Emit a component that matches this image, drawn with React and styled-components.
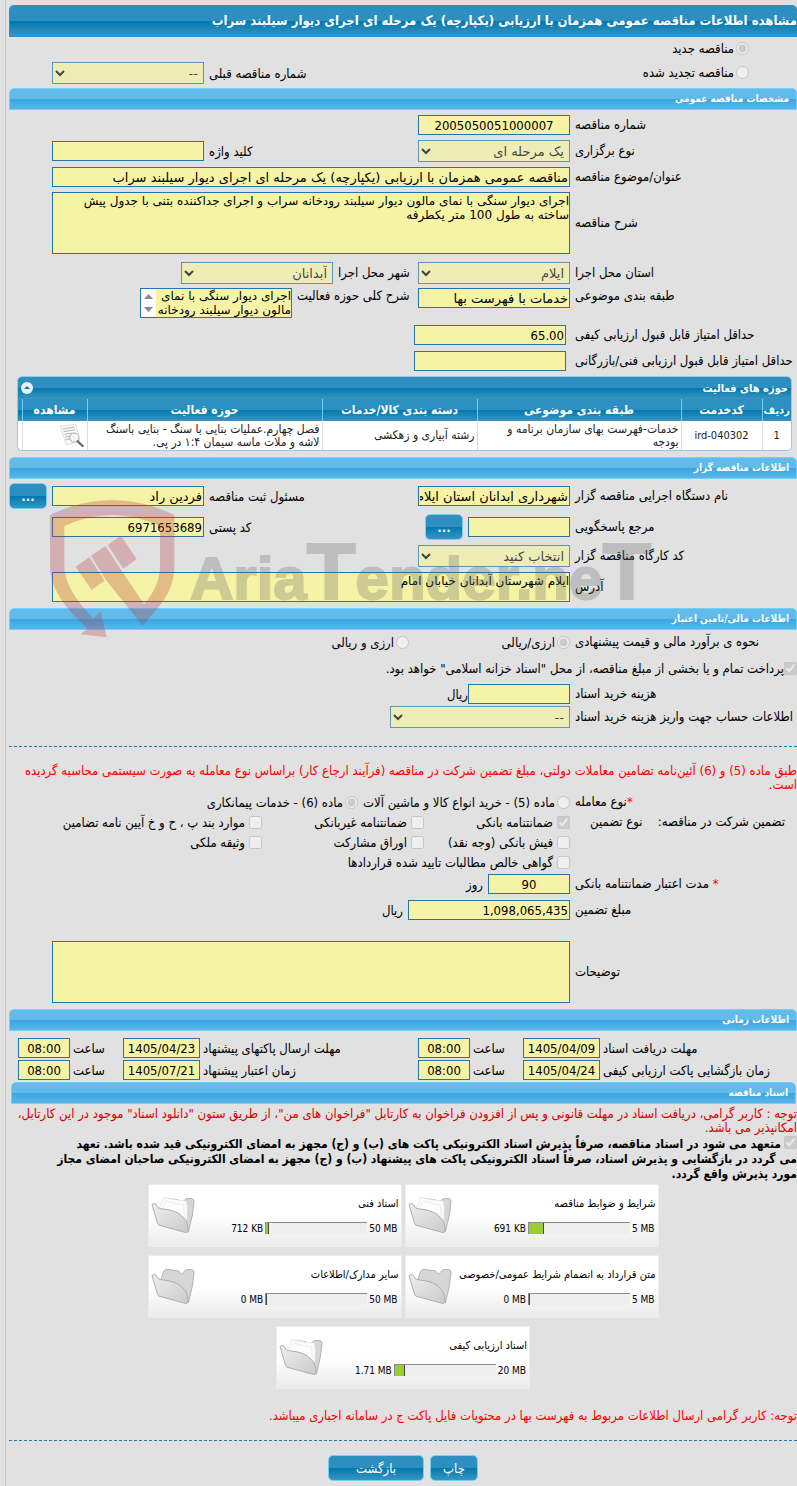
import React from 'react'
import styled, { createGlobalStyle, css } from 'styled-components';

const GlobalStyle = createGlobalStyle`
  *{
    box-sizing:border-box;
  }
  body{
    margin:0;
    background-color:#e1e1e1;
    color:#000;
    font-family:"DejaVu Sans Condensed","DejaVu Sans",sans-serif;
    font-size:13px;
  }
`

const docs = [
  {id:"terms",title:"شرایط و ضوابط مناقصه",used:"691 KB",max:"5 MB",percent:15},
  {id:"tech",title:"اسناد فنی",used:"712 KB",max:"50 MB",percent:3},
  {id:"contract",title:"متن قرارداد به انضمام شرایط عمومی/خصوصی",used:"0 MB",max:"5 MB",percent:0},
  {id:"other",title:"سایر مدارک/اطلاعات",used:"0 MB",max:"50 MB",percent:0},
  {id:"quality",title:"اسناد ارزیابی کیفی",used:"1.71 MB",max:"20 MB",percent:10},
]

const guarantees = [
  {id:"g1",label:"ضمانتنامه بانکی",checked:true},
  {id:"g2",label:"ضمانتنامه غیربانکی"},
  {id:"g3",label:"موارد بند پ ، ح و خ آیین نامه تضامین"},
  {id:"g4",label:"فیش بانکی (وجه نقد)"},
  {id:"g5",label:"اوراق مشارکت"},
  {id:"g6",label:"وثیقه ملکی"},
]

const times = [
  {id:"t1",label:"مهلت دریافت اسناد",date:"1405/04/09"},
  {id:"t2",label:"مهلت ارسال پاکتهای پیشنهاد",date:"1405/04/23"},
  {id:"t3",label:"زمان بازگشایی پاکت ارزیابی کیفی",date:"1405/04/24"},
  {id:"t4",label:"زمان اعتبار پیشنهاد",date:"1405/07/21"},
]

const Choice = ({id,type="checkbox",name,label,checked,gap}) => (
  <ChoiceBox $gap={gap}>
    <input id={id} type={type} name={name} defaultChecked={checked} disabled />
    <label htmlFor={id}>{label}</label>
  </ChoiceBox>
)

const FolderIcon = ({full}) => (
  <svg width="44" height="37" viewBox="0 0 132 110" aria-hidden="true">
    <defs>
      <linearGradient id="folderFront" x1="0" y1="0" x2="1" y2="1">
        <stop offset="0" stopColor="#efefef" />
        <stop offset="1" stopColor="#cacaca" />
      </linearGradient>
    </defs>
    <path d="M28 40 L38 9 Q42 3 50 4 L82 8 L92 18 L103 6 Q108 3 122 4 Q130 6 129 14 L124 54 L112 104 Z" fill="#d6d6d6" stroke="#b2b2b2" strokeWidth="3" />
    {full ? <path d="M24 36 L38 1 L70 7 L106 12 L109 30 L107 80 L60 48 Z" fill="#fcfcfc" stroke="#dedede" strokeWidth="2" /> : null}
    {full ? <path d="M34 32 L44 12 L98 24 L100 60" fill="none" stroke="#e4e4e4" strokeWidth="2" /> : null}
    <path d="M3 22 Q6 18 14 20 L22 32 Q30 36 48 37 Q78 42 92 56 Q108 68 110 86 L111 100 Q110 107 104 106 L24 84 Q20 82 19 76 Z" fill="url(#folderFront)" stroke="#aeaeae" strokeWidth="3" />
  </svg>
)

const ViewIcon = () => (
  <svg width="26" height="26" viewBox="0 0 78 78" aria-hidden="true">
    <path d="M4 10 L50 3 L62 52 L22 66 Z" fill="#fafafa" stroke="#cfcfcf" strokeWidth="2" />
    <path d="M12 18 L46 12 M14 26 L48 20 M16 34 L40 30 M18 42 L36 39 M20 50 L36 47" stroke="#b5b5b5" strokeWidth="3" />
    <circle cx="46" cy="44" r="14" fill="#f3f3f3" fillOpacity="0.9" stroke="#b0b0b0" strokeWidth="3" />
    <path d="M56 55 L71 69" stroke="#6b6b6b" strokeWidth="7" strokeLinecap="round" />
  </svg>
)

const Watermark = () => (
  <WatermarkBox aria-hidden="true">
    <svg width="127" height="140" viewBox="0 0 381 420">
      <g fill="#b4323c">
        <path d="M3 48 Q190 -42 376 48 L376 200 Q376 260 340 310 L281 380 L171 243 L126 170 L169 141 L215 211 L285 316 Q333 260 333 200 L333 81 Q190 15 46 81 L46 200 Q46 270 133 358 L155 338 L173 415 L95 406 L115 388 Q3 290 3 200 Z" />
        <path d="M80 203 L121 175 L167 245 L128 273 Z" />
        <path d="M176 138 L216 110 L263 180 L223 209 Z" />
      </g>
    </svg>
    <WatermarkText>Aria<b>T</b>ender.ne<b>T</b></WatermarkText>
  </WatermarkBox>
)

const DocCard = ({title,used,max,percent}) => (
  <Card>
    <CardInfo>
      <h4>{title}</h4>
      <Usage>
        <span>{used}</span>
        <Bar><div style={{width:`${percent}%`}} /></Bar>
        <span>{max}</span>
      </Usage>
    </CardInfo>
    <FolderIcon full={percent > 0} />
  </Card>
)

const App = () => {
  return(
    <Page dir="rtl" lang="fa">
      <GlobalStyle />
      <PageTitle>مشاهده اطلاعات مناقصه عمومی همزمان با ارزیابی (یکپارچه) یک مرحله ای اجرای دیوار سیلبند سراب</PageTitle>
      <TypeRow>
        <div>
          <Choice id="new" type="radio" name="kind" label="مناقصه جدید" checked gap={2} />
          <Choice id="renewed" type="radio" name="kind" label="مناقصه تجدید شده" gap={2} />
        </div>
        <Group>
          <label htmlFor="prev">شماره مناقصه قبلی</label>
          <Select id="prev" disabled><option>--</option></Select>
        </Group>
      </TypeRow>

      <SectionTitle>مشخصات مناقصه عمومی</SectionTitle>
      <Body $gap={4}>
        <Row>
          <Label htmlFor="number">شماره مناقصه</Label>
          <Fields><NumberInput id="number" $align="center" readOnly value="2005050051000007" /></Fields>
        </Row>
        <Row>
          <Label htmlFor="stage">نوع برگزاری</Label>
          <Fields>
            <Select id="stage" disabled><option>یک مرحله ای</option></Select>
            <Group $end>
              <label htmlFor="keyword">کلید واژه</label>
              <Input id="keyword" readOnly value="" />
            </Group>
          </Fields>
        </Row>
        <Row>
          <Label htmlFor="title">عنوان/موضوع مناقصه</Label>
          <Fields><Input id="title" $wide readOnly value="مناقصه عمومی همزمان با ارزیابی (یکپارچه) یک مرحله ای اجرای دیوار سیلبند سراب" /></Fields>
        </Row>
        <Row>
          <Label htmlFor="desc">شرح مناقصه</Label>
          <Fields><TextArea id="desc" $height={62} readOnly value={"اجرای دیوار سنگی با نمای مالون دیوار سیلبند رودخانه سراب و اجرای جداکننده بتنی با جدول پیش\nساخته به طول 100 متر یکطرفه"} /></Fields>
        </Row>
        <Row $space={4}>
          <Label htmlFor="state">استان محل اجرا</Label>
          <Fields>
            <Select id="state" disabled><option>ایلام</option></Select>
            <InnerLabel htmlFor="city" $width={80}>شهر محل اجرا</InnerLabel>
            <Select id="city" disabled><option>آبدانان</option></Select>
          </Fields>
        </Row>
        <Row $top>
          <Label htmlFor="category">طبقه بندی موضوعی</Label>
          <Fields $top>
            <Input id="category" readOnly value="خدمات با فهرست بها" />
            <InnerLabel htmlFor="scope" $width={121}>شرح کلی حوزه فعالیت</InnerLabel>
            <ScrollBox>
              <TextArea id="scope" $height={28} readOnly value={"اجرای دیوار سنگی با نمای\nمالون دیوار سیلبند رودخانه"} />
              <ScrollBar>
                <svg width="9" height="5" viewBox="0 0 9 5"><path d="M0 5 L4.5 0 L9 5 Z" fill="#8a8a8a" /></svg>
                <svg width="9" height="5" viewBox="0 0 9 5"><path d="M0 0 L4.5 5 L9 0 Z" fill="#8a8a8a" /></svg>
              </ScrollBar>
            </ScrollBox>
          </Fields>
        </Row>
        <Row $gap={9} $space={2}>
          <Label htmlFor="minQuality">حداقل امتیاز قابل قبول ارزیابی کیفی</Label>
          <Fields><NumberInput id="minQuality" readOnly value="65.00" /></Fields>
        </Row>
        <Row $gap={9}>
          <Label htmlFor="minTech">حداقل امتیاز قابل قبول ارزیابی فنی/بازرگانی</Label>
          <Fields><NumberInput id="minTech" readOnly value="" /></Fields>
        </Row>
        <TablePanel>
          <TableHead>
            <span>حوزه های فعالیت</span>
            <button aria-label="بستن">
              <svg width="12" height="12" viewBox="0 0 12 12"><circle cx="6" cy="6" r="6" fill="#e4f1fa" /><path d="M3 7 L6 4 L9 7 Z" fill="#2e6e9e" /></svg>
            </button>
          </TableHead>
          <Table>
            <thead>
              <tr>
                <Th $width={29}>ردیف</Th>
                <Th $width={81}>کدخدمت</Th>
                <Th>طبقه بندی موضوعی</Th>
                <Th $width={155}>دسته بندی کالا/خدمات</Th>
                <Th $width={235}>حوزه فعالیت</Th>
                <Th $width={65}>مشاهده</Th>
                <Th $width={4} aria-hidden="true" />
              </tr>
            </thead>
            <tbody>
              <tr>
                <CenterCell>1</CenterCell>
                <CenterCell>ird-040302</CenterCell>
                <td>خدمات-فهرست بهای سازمان برنامه و<br />بودجه</td>
                <td>رشته آبیاری و زهکشی</td>
                <td>فصل چهارم.عملیات بنایی با سنگ - بنایی باسنگ<br />لاشه و ملات ماسه سیمان ۱:۴ در پی.</td>
                <td><ViewIcon /></td>
                <td />
              </tr>
            </tbody>
          </Table>
        </TablePanel>
      </Body>

      <SectionTitle>اطلاعات مناقصه گزار</SectionTitle>
      <Body $gap={5}>
        <Row>
          <Label htmlFor="org">نام دستگاه اجرایی مناقصه گزار</Label>
          <Fields $edge>
            <Input id="org" readOnly value="شهرداری ابدانان استان ایلام" />
            <Group $end>
              <label htmlFor="officer">مسئول ثبت مناقصه</label>
              <Input id="officer" readOnly value="فردین راد" />
              <MoreButton>...</MoreButton>
            </Group>
          </Fields>
        </Row>
        <Row>
          <Label htmlFor="contact">مرجع پاسخگویی</Label>
          <Fields>
            <Input id="contact" $width={102} readOnly value="" />
            <MoreButton>...</MoreButton>
            <Group $end>
              <label htmlFor="postal">کد پستی</label>
              <NumberInput id="postal" readOnly value="6971653689" />
            </Group>
          </Fields>
        </Row>
        <Row>
          <Label htmlFor="workshop">کد کارگاه مناقصه گزار</Label>
          <Fields><Select id="workshop" disabled><option>انتخاب کنید</option></Select></Fields>
        </Row>
        <Row>
          <Label htmlFor="address">آدرس</Label>
          <Fields><TextArea id="address" $height={30} readOnly value="ایلام شهرستان آبدانان خیابان امام" /></Fields>
        </Row>
      </Body>
      <Watermark />

      <SectionTitle>اطلاعات مالی/تامین اعتبار</SectionTitle>
      <Body $gap={5} $start={1} $bottom={1}>
        <Row>
          <Label as="span">نحوه ی برآورد مالی و قیمت پیشنهادی</Label>
          <Fields>
            <ChoiceCell><Choice id="rial" type="radio" name="currency" label="ارزی/ریالی" checked gap={2} /></ChoiceCell>
            <Choice id="both" type="radio" name="currency" label="ارزی و ریالی" gap={2} />
          </Fields>
        </Row>
        <Choice id="treasury" label='پرداخت تمام و یا بخشی از مبلغ مناقصه، از محل "اسناد خزانه اسلامی" خواهد بود.' checked gap={0} />
        <Pair>
          <Row>
            <Label htmlFor="cost">هزینه خرید اسناد</Label>
            <Fields $tight>
              <Input id="cost" $width={102} readOnly value="" />
              <span>ریال</span>
            </Fields>
          </Row>
          <Row>
            <Label htmlFor="account">اطلاعات حساب جهت واریز هزینه خرید اسناد</Label>
            <Fields><Select id="account" $width={180} disabled><option>--</option></Select></Fields>
          </Row>
        </Pair>
      </Body>
      <Divider $bottom={17} />

      <Note $color="#ff0000">
        طبق ماده (5) و (6) آئین‌نامه تضامین معاملات دولتی، مبلغ تضمین شرکت در مناقصه (فرآیند ارجاع کار) براساس نوع معامله به صورت سیستمی محاسبه گردیده<br />است.
      </Note>
      <Row $small>
        <Label as="span"><em>*</em>نوع معامله</Label>
        <Fields>
          <Choice id="m5" type="radio" name="deal" label="ماده (5) - خرید انواع کالا و ماشین آلات" gap={2} />
          <Choice id="m6" type="radio" name="deal" label="ماده (6) - خدمات پیمانکاری" checked gap={2} />
        </Fields>
      </Row>
      <GuaranteeRow>
        <GuaranteeLabel>
          <span>تضمین شرکت در مناقصه:</span>
          <span>نوع تضمین</span>
        </GuaranteeLabel>
        <GuaranteeGrid>
          {guarantees.map((item) => <Choice key={item.id} {...item} gap={4} />)}
          <WideCell><Choice id="g7" label="گواهی خالص مطالبات تایید شده قراردادها" gap={4} /></WideCell>
        </GuaranteeGrid>
      </GuaranteeRow>
      <Body $gap={4} $start={1}>
        <Row>
          <Label htmlFor="validity"><em>*</em> مدت اعتبار ضمانتنامه بانکی</Label>
          <Fields><NumberInput id="validity" $width={82} $align="center" readOnly value="90" /><span>روز</span></Fields>
        </Row>
        <Row>
          <Label htmlFor="amount">مبلغ تضمین</Label>
          <Fields><NumberInput id="amount" $width={162} readOnly value="1,098,065,435" /><span>ریال</span></Fields>
        </Row>
        <Row $space={16}>
          <Label htmlFor="remarks">توضیحات</Label>
          <Fields><TextArea id="remarks" $height={62} readOnly value="" /></Fields>
        </Row>
      </Body>

      <SectionTitle>اطلاعات زمانی</SectionTitle>
      <TimeGrid>
        {times.map(({id,label,date}) => (
          <React.Fragment key={id}>
            <label htmlFor={id}>{label}</label>
            <NumberInput id={id} $width={77} $align="center" readOnly value={date} />
            <label htmlFor={id + "h"}>ساعت</label>
            <NumberInput id={id + "h"} $width={52} $align="center" readOnly value="08:00" />
          </React.Fragment>
        ))}
      </TimeGrid>

      <SectionTitle $inset>اسناد مناقصه</SectionTitle>
      <Notes>
        <Note $color="#d90000">
          توجه : کاربر گرامی، دریافت اسناد در مهلت قانونی و پس از افزودن فراخوان به کارتابل "فراخوان های من"، از طریق ستون "دانلود اسناد" موجود در این کارتابل،<br />امکانپذیر می باشد.
        </Note>
        <Pledge>
          <input id="pledge" type="checkbox" defaultChecked disabled />
          <label htmlFor="pledge">
            متعهد می شود در اسناد مناقصه، صرفاً پذیرش اسناد الکترونیکی پاکت های (ب) و (ج) مجهز به امضای الکترونیکی قید شده باشد. تعهد<br />
            می گردد در بازگشایی و پذیرش اسناد، صرفاً اسناد الکترونیکی پاکت های پیشنهاد (ب) و (ج) مجهز به امضای الکترونیکی صاحبان امضای مجاز<br />
            مورد پذیرش واقع گردد.
          </label>
        </Pledge>
      </Notes>
      <Cards>
        {docs.map((item) => <DocCard key={item.id} {...item} />)}
      </Cards>
      <Note $color="#ff0000">توجه: کاربر گرامی ارسال اطلاعات مربوط به فهرست بها در محتویات فایل پاکت ج در سامانه اجباری میباشد.</Note>
      <Divider $bottom={14} />
      <Actions>
        <ActionButton>چاپ</ActionButton>
        <ActionButton $wide>بازگشت</ActionButton>
      </Actions>
    </Page>
  )
}

export default App


const darkBlue = css`
  background:linear-gradient(#2e90c0 0%,#2c8fc0 50%,#0078ae 50%,#3a94c2 100%);
`

const Page = styled.div`
  position:relative;
  margin-left:5px;
  padding:5px 0px 5px 3px;
  border-left:1px solid #c6c6c6;
  overflow:hidden;

  em{
    color:#ff0000;
    font-style:normal;
  }
`

const PageTitle = styled.h1`
  ${darkBlue}
  margin:0px;
  height:32px;
  border:1px solid #2a8fd8;
  border-right:none;
  border-radius:5px 5px 0px 0px;
  color:white;
  font-size:13px;
  white-space:nowrap;
  line-height:30px;
`

const TypeRow = styled.div`
  display:flex;
  justify-content:space-between;
  align-items:flex-end;
  height:51px;
  padding:0px 48px 4px 43px;

  & > div:first-child > div{
    height:24px;
  }
`

const SectionTitle = styled.h2`
  margin:${(props) => (props.$inset ? "0px 1px 0px 2px" : "0px")};
  height:22px;
  line-height:20px;
  padding-right:7px;
  border:1px solid #6fd0f8;
  border-radius:5px 5px 0px 0px;
  background:linear-gradient(#63bbeb 0%,#62baea 50%,#38a6e2 50%,#5cb5e8 100%);
  color:white;
  font-size:10px;
`

const Body = styled.div`
  display:flex;
  flex-direction:column;
  gap:${(props) => props.$gap}px;
  padding-top:${(props) => props.$start || 4}px;
  padding-bottom:${(props) => props.$bottom || 6}px;
`

const Pair = styled.div`
  display:flex;
  flex-direction:column;
  gap:1px;
`

const Row = styled.div`
  display:flex;
  align-items:${(props) => (props.$top ? "flex-start" : "center")};
  gap:${(props) => props.$gap || 5}px;
  min-height:${(props) => (props.$small ? 20 : 22)}px;
  margin-top:${(props) => props.$space || 0}px;
`

const Label = styled.label`
  flex:none;
  width:222px;
  line-height:16px;
  text-align:left;
  white-space:nowrap;
`

const InnerLabel = styled(Label)`
  width:${(props) => props.$width}px;
  margin-right:-5px;
`

const Fields = styled.div`
  flex:1;
  display:flex;
  align-items:${(props) => (props.$top ? "flex-start" : "center")};
  gap:${(props) => (props.$tight ? 0 : 5)}px;
  padding-left:${(props) => (props.$edge ? 0 : 43)}px;
  white-space:nowrap;
`

const Group = styled.div`
  display:flex;
  align-items:center;
  gap:5px;
  margin-right:${(props) => (props.$end ? "auto" : "0px")};
`

const fieldStyle = css`
  margin:0px;
  border:1px solid #2675a8;
  border-radius:0px;
  background-color:#f5f3a5;
  color:#000;
  font-family:"DejaVu Sans",sans-serif;
  outline:none;
`

const Input = styled.input`
  ${fieldStyle}
  width:${(props) => (props.$wide ? "100%" : `${props.$width || 152}px`)};
  height:20px;
  padding:0px 1px;
  font-size:13px;
  text-align:${(props) => props.$align || "right"};
`

const NumberInput = styled(Input)`
  font-family:"DejaVu Sans Condensed","DejaVu Sans",sans-serif;
`

const Select = styled.select`
  ${fieldStyle}
  width:${(props) => props.$width || 152}px;
  height:22px;
  padding:0px 1px;
  font-size:13px;
`

const TextArea = styled.textarea`
  ${fieldStyle}
  display:block;
  width:100%;
  height:${(props) => props.$height}px;
  padding:1px 0px;
  font-size:12px;
  line-height:14px;
  resize:none;
`

const ScrollBox = styled.div`
  display:flex;
  width:152px;
  border:1px solid #2675a8;
  background-color:#fcfcfc;

  textarea{
    flex:1;
    min-width:0px;
    padding:0px;
    border:none;
    overflow:hidden;
    white-space:pre;
  }
`

const ScrollBar = styled.div`
  display:flex;
  flex-direction:column;
  align-items:center;
  justify-content:space-between;
  width:15px;
  padding:5px 0px;
`

const ChoiceBox = styled.div`
  display:flex;
  align-items:center;
  gap:${(props) => props.$gap}px;
  min-height:20px;
  white-space:nowrap;

  input{
    margin:0px;
    width:13px;
    height:13px;
  }
`

const ChoiceCell = styled.div`
  width:156px;
`

const button = css`
  ${darkBlue}
  height:26px;
  padding:0px;
  border:1px solid #6fd0f8;
  border-radius:5px;
  color:white;
  font-family:inherit;
  font-size:13px;
`

const MoreButton = styled.button`
  ${button}
  width:38px;
  font-weight:bold;
`

const ActionButton = styled.button`
  ${button}
  width:${(props) => (props.$wide ? 96 : 48)}px;
`

const TablePanel = styled.div`
  margin:0px 5px 0px 8px;
  border:1px solid #9cc8e6;
  border-radius:5px;
  background-color:white;
  overflow:hidden;
`

const TableHead = styled.div`
  ${darkBlue}
  display:flex;
  align-items:center;
  justify-content:space-between;
  height:22px;
  padding:0px 3px;
  color:white;
  font-size:11px;
  font-weight:bold;

  button{
    display:flex;
    padding:0px;
    border:none;
    background:none;
  }
`

const Table = styled.table`
  width:100%;
  border-collapse:collapse;
  table-layout:fixed;

  td{
    height:29px;
    padding:0px 2px;
    border-left:1px solid #dcdcdc;
    color:#222;
    font-size:12px;
    line-height:13px;
    white-space:nowrap;
  }
  td:last-child,
  th:last-child{
    border-left:none;
  }
  th:first-child{
    font-size:11px;
  }
  svg{
    display:block;
  }
`

const Th = styled.th`
  ${darkBlue}
  width:${(props) => (props.$width ? `${props.$width}px` : "auto")};
  height:22px;
  padding:0px;
  border-left:1px solid #6fd0f8;
  color:white;
  font-size:12px;
  white-space:nowrap;
`

const CenterCell = styled.td`
  text-align:center;

  ${Table} &{
    font-size:11px;
  }
`

const Divider = styled.hr`
  margin:17px 0px ${(props) => props.$bottom}px;
  border:none;
  border-top:1px dashed #2675a8;
`

const Note = styled.p`
  margin:0px;
  color:${(props) => props.$color};
  line-height:14px;
  white-space:nowrap;
`

const GuaranteeRow = styled.div`
  display:flex;
  gap:5px;
  height:60px;
`

const GuaranteeLabel = styled.div`
  display:flex;
  justify-content:space-between;
  width:222px;
  padding:0px 12px 0px 15px;
  line-height:20px;
  white-space:nowrap;
`

const GuaranteeGrid = styled.div`
  flex:1;
  display:grid;
  grid-template-columns:146px 162px 1fr;
`

const WideCell = styled.div`
  grid-column:1 / -1;
`

const TimeGrid = styled.div`
  display:grid;
  grid-template-columns:197px 77px 53px 52px 1fr 77px 53px 52px;
  align-items:center;
  grid-auto-rows:22px;
  padding:6px 0px 1px 9px;

  label{
    padding-left:3px;
    text-align:left;
    white-space:nowrap;
  }
`

const Notes = styled.div`
  display:flex;
  flex-direction:column;
  gap:1px;
  padding:3px 0px 2px;
`

const Pledge = styled.div`
  font-size:12px;
  font-weight:bold;
  line-height:15px;
  white-space:nowrap;

  input{
    margin:0px 0px 0px 3px;
    width:13px;
    height:13px;
    vertical-align:-1px;
  }
`

const Cards = styled.div`
  display:flex;
  flex-wrap:wrap;
  justify-content:center;
  gap:8px 3px;
  max-width:520px;
  margin:0px auto 20px;
`

const Card = styled.div`
  display:flex;
  justify-content:space-between;
  align-items:center;
  width:254px;
  height:63px;
  padding:0px 2px;
  border:1px solid #ececec;
  background:linear-gradient(#ffffff 50%,#ebebeb);
`

const CardInfo = styled.div`
  h4{
    margin:0px 0px 12px;
    font-size:11px;
    line-height:13px;
    font-weight:normal;
    white-space:nowrap;
  }
`

const Usage = styled.div`
  direction:ltr;
  display:flex;
  align-items:center;
  justify-content:flex-end;
  gap:2px;
  padding-right:1px;
  font-size:10px;
  line-height:13px;
`

const Bar = styled.div`
  width:102px;
  height:12px;
  border-top:1px solid #8c8c8c;
  border-left:1px solid #8c8c8c;
  background-color:#eeeeee;

  div{
    height:100%;
    border-right:1px solid #444;
    background-color:#9acd32;
  }
`

const Actions = styled.div`
  display:flex;
  justify-content:center;
  gap:6px;
`

const WatermarkBox = styled.div`
  position:absolute;
  top:499px;
  left:43px;
  direction:ltr;
  display:flex;
  align-items:flex-start;
  opacity:0.28;
  pointer-events:none;
`

const WatermarkText = styled.span`
  margin:28px 0px 0px 14px;
  color:#666;
  font-family:"Liberation Sans",sans-serif;
  font-size:60px;
  font-weight:bold;
  line-height:90px;
  -webkit-text-stroke:2px #666;

  b{
    font-size:80px;
  }
`
